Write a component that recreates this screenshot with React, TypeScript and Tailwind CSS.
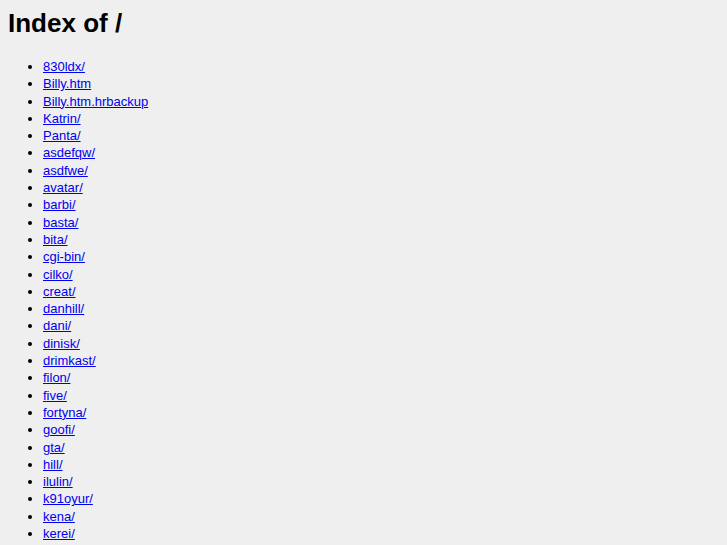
import React from 'react';

const entries = [
  '830ldx/',
  'Billy.htm',
  'Billy.htm.hrbackup',
  'Katrin/',
  'Panta/',
  'asdefqw/',
  'asdfwe/',
  'avatar/',
  'barbi/',
  'basta/',
  'bita/',
  'cgi-bin/',
  'cilko/',
  'creat/',
  'danhill/',
  'dani/',
  'dinisk/',
  'drimkast/',
  'filon/',
  'five/',
  'fortyna/',
  'goofi/',
  'gta/',
  'hill/',
  'ilulin/',
  'k91oyur/',
  'kena/',
  'kerei/',
];

const App: React.FC = () => {
  return (
    <div className="min-h-screen bg-[#efefef] px-2 pt-2 text-black font-['Liberation_Sans',Arial,sans-serif]">
      <h1 className="text-[26px] font-bold leading-[30px]">Index of /</h1>
      {/* listing */}
      <ul className="mt-[20px] list-disc pl-[35px] text-[13px] leading-[17.3px]">
        {entries.map((name) => (
          <li key={name}>
            <a href="#" className="text-[#0000ee] underline">
              {name}
            </a>
          </li>
        ))}
      </ul>
    </div>
  );
};

export default App;
